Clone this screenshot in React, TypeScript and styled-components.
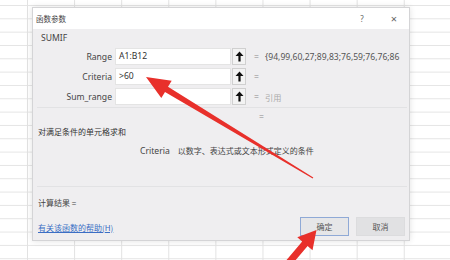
import styled, { createGlobalStyle } from "styled-components";

const GlobalStyle = createGlobalStyle`
  html, body {
    margin: 0;
    padding: 0;
    background: #fff;
  }
  body {
    font-family: "Noto Sans", "Noto Sans CJK SC", sans-serif;
  }
`;

const args = [
  { name: "Range", value: "A1:B12", result: "{94,99,60,27;89,83;76,59;76,76;86", muted: false },
  { name: "Criteria", value: ">60", result: "", muted: false },
  { name: "Sum_range", value: "", result: "引用", muted: true },
];

function UpIcon() {
  return (
    <svg width="9" height="11" viewBox="0 0 9 11">
      <path d="M4.5 0.5 L8.5 5 L5.6 5 L5.6 10.5 L3.4 10.5 L3.4 5 L0.5 5 Z" fill="#111" />
    </svg>
  );
}

function App() {
  return (
    <>
      <GlobalStyle />
      <Page>
        <Dialog>
          <TitleBar>
            <Title>函数参数</Title>
            <TitleBtn>?</TitleBtn>
            <TitleBtn $wide>×</TitleBtn>
          </TitleBar>
          <Body>
            <Group>
              <GroupName>SUMIF</GroupName>
              <ArgGrid>
                {args.map((a) => (
                  <ArgRow key={a.name}>
                    <ArgLabel>{a.name}</ArgLabel>
                    <ArgInput>{a.value}</ArgInput>
                    <RefBtn>
                      <UpIcon />
                    </RefBtn>
                    <Eq>=</Eq>
                    <ArgResult $muted={a.muted}>{a.result}</ArgResult>
                  </ArgRow>
                ))}
              </ArgGrid>
            </Group>
            <TotalEq>=</TotalEq>
            <Desc>对满足条件的单元格求和</Desc>
            <ArgDesc>
              <b>Criteria</b>以数字、表达式或文本形式定义的条件
            </ArgDesc>
            <Footer>
              <Result>计算结果 =</Result>
              <FooterRow>
                <HelpLink>有关该函数的帮助(H)</HelpLink>
                <Buttons>
                  <DlgButton $primary>确定</DlgButton>
                  <DlgButton>取消</DlgButton>
                </Buttons>
              </FooterRow>
            </Footer>
          </Body>
        </Dialog>

        <Annotation width="450" height="260" viewBox="0 0 450 260">
          <polygon
            points="146,77 171.7,80.8 168,86.8 313.3,177.6 312.7,178.4 165,92 161.3,98"
            fill="#e8302b"
          />
          <polygon
            points="316.5,230 312.5,250.2 307.6,246 280.5,278 275.1,273.5 302.2,241.5 297.3,237.3"
            fill="#e8302b"
          />
        </Annotation>
      </Page>
    </>
  );
}

export default App;

const Page = styled.div`
  position: relative;
  width: 450px;
  height: 260px;
  overflow: hidden;
  padding: 7px 0 0 32px;
  box-sizing: border-box;
  background-color: #fff;
  background-image: linear-gradient(to right, #e2e2e2 1px, transparent 1px),
    linear-gradient(to bottom, #e4e4e4 1px, transparent 1px);
  background-size: 47.1px 13.33px;
  background-position: 27px 5px;
`;

const Dialog = styled.div`
  width: 378px;
  height: 234px;
  box-sizing: border-box;
  border: 1px solid #d4d4d6;
  background: #efeef0;
  box-shadow: 0 0 6px rgba(0, 0, 0, 0.12);
  display: flex;
  flex-direction: column;
`;

const TitleBar = styled.div`
  height: 21px;
  background: #fff;
  display: flex;
  align-items: center;
  padding: 0 10px 0 3px;
  flex-shrink: 0;
`;

const Title = styled.div`
  flex: 1;
  font-family: "Noto Sans CJK SC", sans-serif;
  font-size: 7.5px;
  color: #444;
`;

const TitleBtn = styled.div<{ $wide?: boolean }>`
  width: 10px;
  margin-left: ${(p) => (p.$wide ? "22px" : "0")};
  text-align: center;
  font-family: "Noto Sans", sans-serif;
  font-size: ${(p) => (p.$wide ? "11px" : "8px")};
  color: #666;
`;

const Body = styled.div`
  flex: 1;
  display: flex;
  flex-direction: column;
  padding: 0 4px 4px 4px;
`;

const Group = styled.div`
  border-bottom: 1px solid #e2e2e4;
  margin-right: -2px;
  padding-bottom: 2px;
`;

const GroupName = styled.div`
  font-size: 8.6px;
  color: #444;
  height: 19px;
  line-height: 18px;
  padding-left: 4px;
`;

const ArgGrid = styled.div`
  display: flex;
  flex-direction: column;
  gap: 3px;
`;

const ArgRow = styled.div`
  display: grid;
  grid-template-columns: 78px 116px 15px 18px 1fr;
  align-items: center;
  height: 17px;
`;

const ArgLabel = styled.div`
  text-align: right;
  padding-right: 3px;
  font-size: 8.6px;
  color: #444;
`;

const ArgInput = styled.div`
  height: 17px;
  box-sizing: border-box;
  background: #fff;
  border: 1px solid #e4e4e4;
  font-size: 8.6px;
  color: #333;
  line-height: 15px;
  padding-left: 3px;
`;

const RefBtn = styled.div`
  height: 17px;
  margin-left: 1px;
  box-sizing: border-box;
  background: #f3f3f3;
  border: 1px solid #d0d0d0;
  display: flex;
  align-items: center;
  justify-content: center;
`;

const Eq = styled.div`
  text-align: center;
  font-size: 8.6px;
  color: #8a8a8a;
  padding-left: 3px;
`;

const ArgResult = styled.div<{ $muted: boolean }>`
  font-family: ${(p) => (p.$muted ? '"Noto Sans CJK SC", sans-serif' : '"Noto Sans", sans-serif')};
  font-size: ${(p) => (p.$muted ? "8.2px" : "8.6px")};
  color: ${(p) => (p.$muted ? "#aaa" : "#555")};
  white-space: nowrap;
  padding-left: 1px;
`;

const TotalEq = styled.div`
  font-size: 8.6px;
  color: #8a8a8a;
  padding-left: 222px;
  height: 13px;
  line-height: 19px;
`;

const Desc = styled.div`
  font-family: "Noto Sans CJK SC", sans-serif;
  font-size: 8px;
  color: #333;
  margin-top: 5px;
  padding-left: 1px;
`;

const ArgDesc = styled.div`
  font-family: "Noto Sans CJK SC", sans-serif;
  font-size: 8px;
  color: #444;
  padding-left: 103px;
  margin-top: 8px;
  b {
    font-family: "Noto Sans", sans-serif;
    font-weight: normal;
    font-size: 8.6px;
    margin-right: 8px;
  }
`;

const Footer = styled.div`
  margin-top: auto;
  border-top: 1px solid #e2e2e4;
  margin-right: -2px;
  padding-right: 2px;
`;

const Result = styled.div`
  font-family: "Noto Sans CJK SC", sans-serif;
  font-size: 8px;
  line-height: 12px;
  color: #444;
  padding: 10px 0 0 1px;
`;

const FooterRow = styled.div`
  display: flex;
  align-items: center;
  justify-content: space-between;
  margin-top: 8px;
`;

const HelpLink = styled.a`
  font-family: "Noto Sans CJK SC", sans-serif;
  font-size: 8px;
  color: #3b6ec4;
  text-decoration: underline;
  padding: 1px 0 0 1px;
`;

const Buttons = styled.div`
  display: flex;
  gap: 7px;
`;

const DlgButton = styled.div<{ $primary?: boolean }>`
  width: 49px;
  height: 19px;
  box-sizing: border-box;
  display: flex;
  align-items: center;
  justify-content: center;
  font-family: "Noto Sans CJK SC", sans-serif;
  font-size: 8px;
  color: #555;
  background: ${(p) => (p.$primary ? "#e6e6e8" : "#e1e1e3")};
  border: 1px solid ${(p) => (p.$primary ? "#8fa9d6" : "#dcdcde")};
`;

const Annotation = styled.svg`
  position: absolute;
  left: 0;
  top: 0;
  pointer-events: none;
`;
